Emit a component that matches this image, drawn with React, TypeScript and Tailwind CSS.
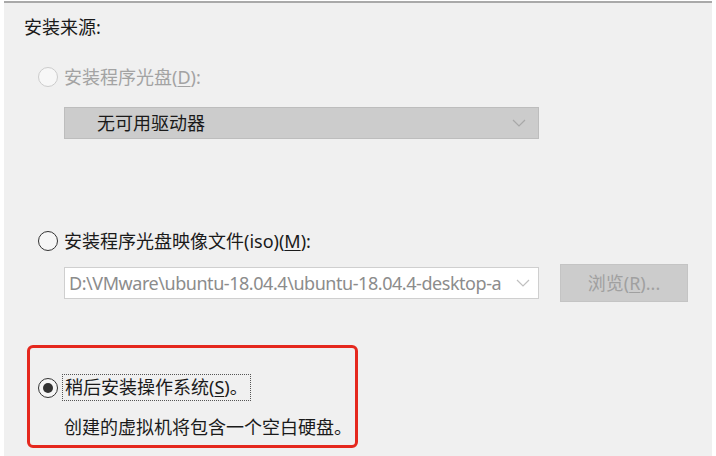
const font = { fontFamily: '"Noto Sans", "Noto Sans CJK SC", sans-serif' };

type RadioProps = {
  checked?: boolean;
  disabled?: boolean;
};

const Radio = ({ checked, disabled }: RadioProps) => (
  <span
    className={
      disabled
        ? "flex h-[20px] w-[20px] shrink-0 items-center justify-center rounded-full border-[1.5px] border-[#cccccc] bg-[#f7f7f7]"
        : "flex h-[20px] w-[20px] shrink-0 items-center justify-center rounded-full border-[1.5px] border-[#333333] bg-[#f6f6f6]"
    }
  >
    {checked && <span className="h-[10px] w-[10px] rounded-full bg-[#333333]" />}
  </span>
);

const Chevron = ({ color }: { color: string }) => (
  <svg width="14" height="8" viewBox="0 0 14 8" fill="none">
    <path d="M1 1l6 6 6-6" stroke={color} strokeWidth="1.2" />
  </svg>
);

export default function App() {
  return (
    <div
      className="h-[456px] w-[716px] overflow-hidden bg-white px-1 pt-px text-[18px] leading-6 text-[#1a1a1a]"
      style={font}
    >
      <div className="flex h-full flex-col border-t-2 border-[#a9a9a9] bg-[#f0f0f0] pl-5 pt-3">
        <div className="h-6">安装来源:</div>

        <div className="mt-[26px] flex h-6 items-center gap-[6px] pl-[14px] text-[#a3a3a3]">
          <Radio disabled />
          <span>
            安装程序光盘(<span className="underline underline-offset-2">D</span>):
          </span>
        </div>

        <div className="ml-10 mt-[18px] flex h-8 w-[475px] items-center justify-between border border-[#bdbdbd] bg-[#cccccc] pl-8 pr-3">
          <span>无可用驱动器</span>
          <Chevron color="#a8a8a8" />
        </div>

        <div className="mt-[90px] flex h-6 items-center gap-[6px] pl-[14px]">
          <Radio />
          <span>
            安装程序光盘映像文件(iso)(<span className="underline underline-offset-2">M</span>):
          </span>
        </div>

        <div className="mt-[11px] flex h-[38px] items-center">
          <div className="ml-10 flex h-8 w-[475px] items-center border border-[#cfcfcf] bg-white pl-1 pr-2">
            <span className="flex-1 whitespace-nowrap tracking-[-0.45px] text-[#8c8c8c]">
              D:\VMware\ubuntu-18.04.4\ubuntu-18.04.4-desktop-a
            </span>
            <span className="ml-1">
              <Chevron color="#c0c0c0" />
            </span>
          </div>
          <div className="ml-[21px] flex h-[38px] w-[128px] items-center justify-center border border-[#c4c4c4] bg-[#cccccc] text-[#a0a0a0]">
            浏览(<span className="underline underline-offset-2">R</span>)...
          </div>
        </div>

        <div className="ml-[3px] mt-[43px] h-[103px] w-[331px] rounded-md border-[3px] border-[#e5281e] pl-2 pt-[26px]">
          <div className="flex h-[27px] items-center gap-1">
            <Radio checked />
            <span className="border border-dotted border-[#555555] px-0.5 leading-[25px]">
              稍后安装操作系统(<span className="underline underline-offset-2">S</span>)。
            </span>
          </div>
          <div className="ml-[26px] mt-[14px] h-6 whitespace-nowrap">创建的虚拟机将包含一个空白硬盘。</div>
        </div>
      </div>
    </div>
  );
}
